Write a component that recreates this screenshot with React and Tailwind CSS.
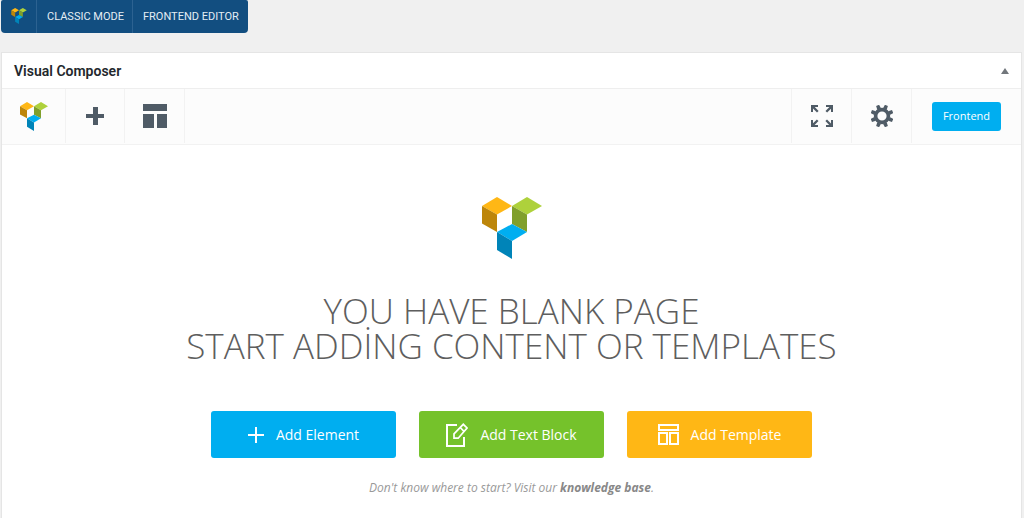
import React from 'react';

function Logo({ className }) {
  return (
    <svg viewBox="0 0 60 62" className={className} aria-hidden="true">
      <path fill="#ffb715" d="M0 9 15 0 30 9 15 17.5z" />
      <path fill="#bd860a" d="M0 9 15 17.5V35L0 26.5z" />
      <path fill="#aed13b" d="M30 9 45 0 60 9 45 17.5z" />
      <path fill="#809f2b" d="M30 9 45 17.5V35L30 27z" />
      <path fill="#00aef0" d="M15 35 30 27 45 35 30 44z" />
      <path fill="#0084b8" d="M15 35 30 44V62L15 53z" />
    </svg>
  );
}

function GearIcon() {
  const teeth = [22.5, 67.5, 112.5, 157.5, 202.5, 247.5, 292.5, 337.5];
  return (
    <svg viewBox="-11 -11 22 22" className="size-[22px]" aria-hidden="true">
      <circle r="6.4" fill="none" stroke="#4f5b66" strokeWidth="3.6" />
      {teeth.map((angle) => (
        <path key={angle} fill="#4f5b66" d="M-2-7.5-1.6-11.5H1.6L2-7.5z" transform={`rotate(${angle})`} />
      ))}
    </svg>
  );
}

function ExpandIcon() {
  return (
    <svg viewBox="0 0 22 22" className="size-[22px]" aria-hidden="true">
      {[0, 90, 180, 270].map((angle) => (
        <g key={angle} transform={`rotate(${angle} 11 11)`}>
          <path fill="#4f5b66" d="M0 0H7V2H3.8L7.6 5.9 6 7.5 2 3.6V7H0z" />
        </g>
      ))}
    </svg>
  );
}

function ToolButton({ label, className, children }) {
  return (
    <button
      type="button"
      aria-label={label}
      className={`flex items-center justify-center border-[#f2f2f2] ${className}`}
    >
      {children}
    </button>
  );
}

function ActionButton({ className, children }) {
  return (
    <button
      type="button"
      className={`flex h-[47px] w-[185px] items-center justify-center gap-3 rounded-[3px] text-sm text-white ${className}`}
    >
      {children}
    </button>
  );
}

export default function App() {
  return (
    <div className="flex min-h-screen flex-col bg-[#f0f0f0] pr-0.5 pl-px font-['Open_Sans',sans-serif]">
      <nav className="flex h-[33px] self-start rounded-b-[4px] rounded-t-[2px] bg-[#124e80] font-[Roboto,sans-serif] text-[11px] text-[#e4edf4]">
        <a href="#composer" aria-label="Visual Composer" className="flex w-9 items-center justify-center border-r border-[#2c6291] pb-0.5">
          <Logo className="h-4 w-4" />
        </a>
        <a href="#classic" className="flex items-center border-r border-[#2c6291] pt-0.5 pr-2 pl-2.5">CLASSIC MODE</a>
        <a href="#frontend" className="flex items-center pt-0.5 pr-[9px] pl-2.5">FRONTEND EDITOR</a>
      </nav>

      <main className="mt-[19px] flex flex-1 flex-col border border-b-0 border-[#e5e5e5] bg-white">
        <header className="flex h-9 items-center justify-between border-b border-[#eeeeee] px-3">
          <h2 className="font-[Roboto,sans-serif] text-sm font-semibold text-[#23282d]">Visual Composer</h2>
          <button type="button" aria-label="Toggle panel" className="flex">
            <svg viewBox="0 0 8 6" className="h-1.5 w-2" aria-hidden="true">
              <path fill="#72777c" d="M4 0 8 6H0z" />
            </svg>
          </button>
        </header>

        <div className="flex h-14 justify-between border-b border-[#f2f2f2] bg-[#fcfcfc]">
          <div className="flex pb-px">
            <ToolButton label="Visual Composer" className="w-16 border-r">
              <Logo className="h-[29px] w-7" />
            </ToolButton>
            <ToolButton label="Add element" className="w-[59px] border-r">
              <svg viewBox="0 0 18 18" className="size-[18px]" aria-hidden="true">
                <path fill="#4f5b66" d="M7 0h5v7h6v4h-6v7H7v-7H0V7h7z" />
              </svg>
            </ToolButton>
            <ToolButton label="Templates" className="w-[60px] border-r">
              <svg viewBox="0 0 24 24" className="size-6" aria-hidden="true">
                <path fill="#4f5b66" d="M0 0h24v7H0zM0 10h11v14H0zM14 10h10v14H14z" />
              </svg>
            </ToolButton>
          </div>
          <div className="flex pb-px">
            <ToolButton label="Full screen" className="w-[60px] border-l">
              <ExpandIcon />
            </ToolButton>
            <ToolButton label="Settings" className="w-[61px] border-x">
              <GearIcon />
            </ToolButton>
            <div className="flex items-center px-5">
              <button type="button" className="h-[29px] w-[69px] rounded-[3px] bg-[#00aef0] text-[11px] text-white">
                Frontend
              </button>
            </div>
          </div>
        </div>

        <section className="flex flex-col items-center px-4 pt-[52px]">
          <Logo className="h-[62px] w-[60px]" />
          <h1 className="mt-[34px] text-center text-[35px]/[35px] font-light text-[#5e5e5e]">
            YOU HAVE BLANK PAGE
            <br />
            START ADDİNG CONTENT OR TEMPLATES
          </h1>
          <div className="mt-12 flex flex-wrap justify-center gap-[23px]">
            <ActionButton className="bg-[#00aef0]">
              <svg viewBox="0 0 16 16" className="size-4" fill="none" stroke="currentColor" strokeWidth="2" aria-hidden="true">
                <path d="M8 0v16M0 8h16" />
              </svg>
              Add Element
            </ActionButton>
            <ActionButton className="bg-[#75c22b]">
              <svg viewBox="0 0 22 24" className="h-6 w-[22px]" fill="none" stroke="currentColor" strokeWidth="2" aria-hidden="true">
                <path d="M11 2H1v21h17v-9" />
                <path strokeWidth="1.7" d="M8 15.2V10.8L17.3 1.3 21 5 12.2 15.2zM14.2 4.5 18 8.3" />
              </svg>
              Add Text Block
            </ActionButton>
            <ActionButton className="bg-[#ffb715]">
              <svg viewBox="0 0 21 21" className="size-[21px]" fill="none" stroke="currentColor" strokeWidth="2" aria-hidden="true">
                <path d="M1 1h19v5H1zM1 9h8v11H1zM12 9h8v11h-8z" />
              </svg>
              Add Template
            </ActionButton>
          </div>
          <p className="mt-5 text-xs/5 text-[#999999] italic">
            Don't know where to start? Visit our{' '}
            <a href="#knowledge-base" className="font-bold text-[#888888]">knowledge base</a>.
          </p>
        </section>
      </main>
    </div>
  );
}
